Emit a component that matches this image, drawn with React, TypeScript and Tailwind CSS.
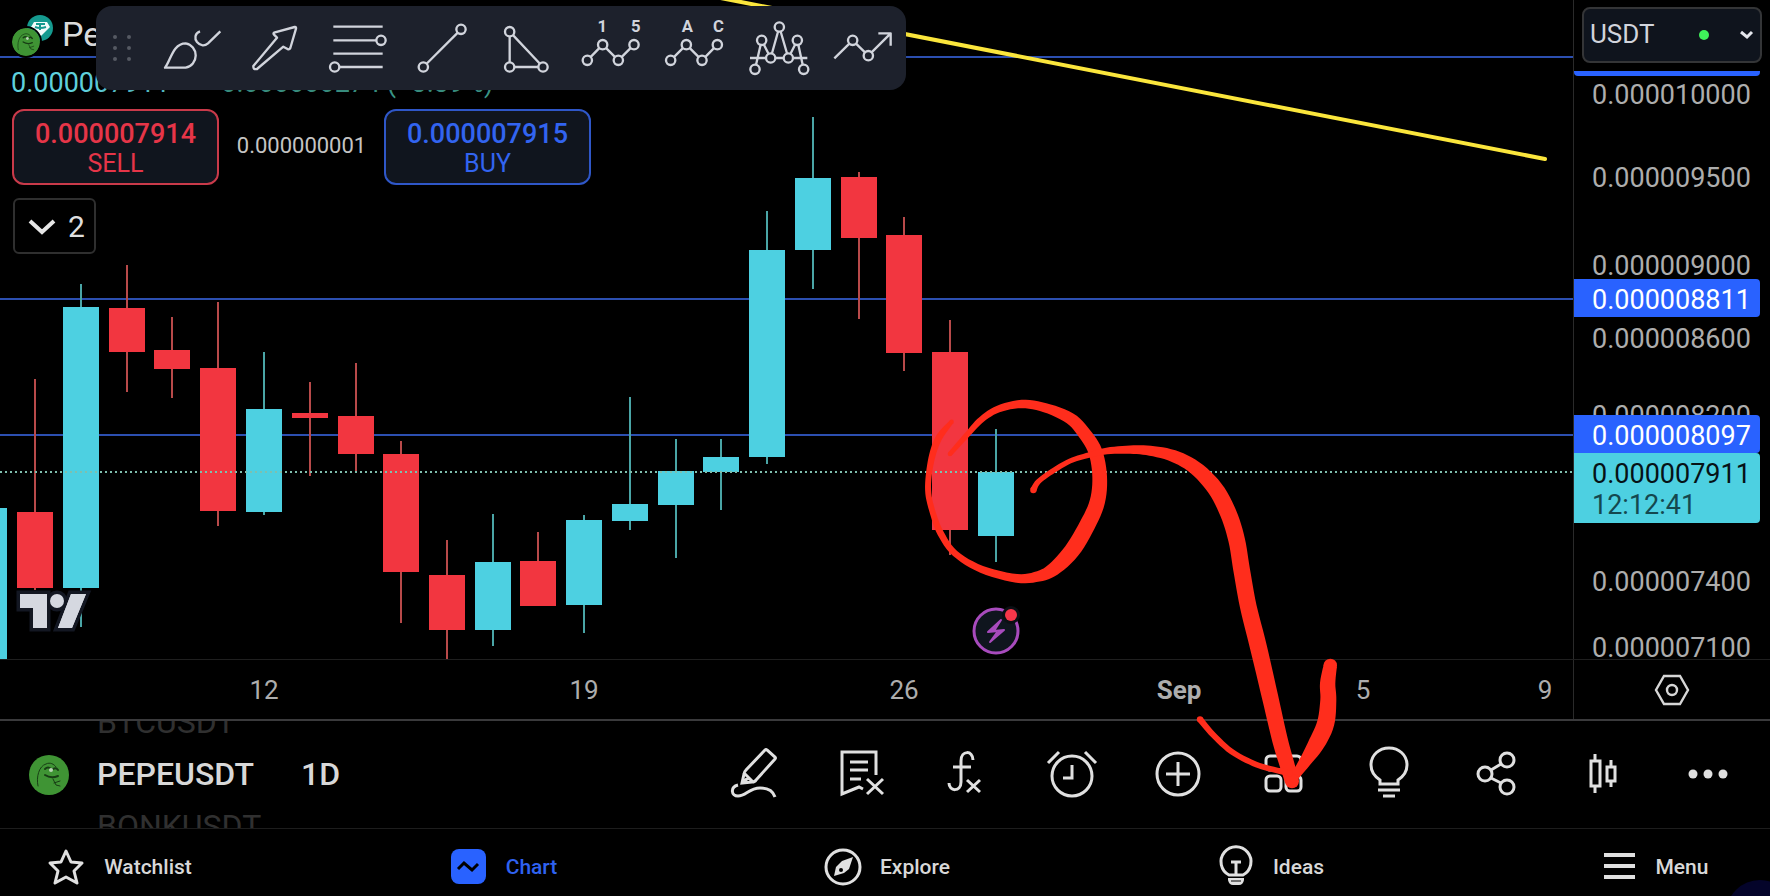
import { useState } from "react";
import type { ReactNode } from "react";

type Candle = { x: number; top: number; bottom: number; high: number; low: number; up: boolean };
type BrushPoint = [number, number, number];

const UP = "#4dd0e1";
const DOWN = "#f23640";

const candles: Candle[] = [
  { x: -11, top: 508, bottom: 659, high: 508, low: 659, up: true },
  { x: 35, top: 512, bottom: 588, high: 379, low: 590, up: false },
  { x: 81, top: 307, bottom: 588, high: 284, low: 627, up: true },
  { x: 127, top: 308, bottom: 352, high: 265, low: 392, up: false },
  { x: 172, top: 350, bottom: 369, high: 317, low: 398, up: false },
  { x: 218, top: 368, bottom: 511, high: 302, low: 526, up: false },
  { x: 264, top: 409, bottom: 512, high: 352, low: 515, up: true },
  { x: 310, top: 413, bottom: 418, high: 382, low: 476, up: false },
  { x: 356, top: 416, bottom: 454, high: 363, low: 472, up: false },
  { x: 401, top: 454, bottom: 572, high: 441, low: 623, up: false },
  { x: 447, top: 575, bottom: 630, high: 540, low: 659, up: false },
  { x: 493, top: 562, bottom: 630, high: 514, low: 646, up: true },
  { x: 538, top: 561, bottom: 606, high: 532, low: 606, up: false },
  { x: 584, top: 520, bottom: 605, high: 515, low: 633, up: true },
  { x: 630, top: 504, bottom: 521, high: 397, low: 530, up: true },
  { x: 676, top: 471, bottom: 505, high: 439, low: 558, up: true },
  { x: 721, top: 457, bottom: 472, high: 439, low: 510, up: true },
  { x: 767, top: 250, bottom: 457, high: 211, low: 464, up: true },
  { x: 813, top: 178, bottom: 250, high: 117, low: 289, up: true },
  { x: 859, top: 177, bottom: 238, high: 172, low: 319, up: false },
  { x: 904, top: 235, bottom: 353, high: 217, low: 371, up: false },
  { x: 950, top: 352, bottom: 530, high: 320, low: 555, up: false },
  { x: 996, top: 472, bottom: 536, high: 429, low: 562, up: true },
];

const levels = [57, 299, 435];

const prices = [
  { y: 95, label: "0.000010000" },
  { y: 178, label: "0.000009500" },
  { y: 266, label: "0.000009000" },
  { y: 339, label: "0.000008600" },
  { y: 416, label: "0.000008200" },
  { y: 582, label: "0.000007400" },
  { y: 648, label: "0.000007100" },
];

const dates = [
  { x: 264, label: "12" },
  { x: 584, label: "19" },
  { x: 904, label: "26" },
  { x: 1179, label: "Sep", bold: true },
  { x: 1363, label: "5" },
  { x: 1545, label: "9" },
];

// x, y and brush width, in thirds of a pixel
const circleStroke: BrushPoint[] = [
  [155, 125, 13], [120, 168, 20], [100, 215, 20], [87, 280, 18], [85, 340, 18], [99, 400, 18],
  [122, 460, 20], [165, 520, 19], [245, 568, 22], [350, 595, 26], [415, 589, 32], [460, 568, 40],
  [515, 513, 48], [562, 435, 48], [592, 365, 46], [599, 290, 44], [586, 215, 42], [553, 160, 39],
  [510, 115, 35], [435, 83, 28], [365, 72, 25], [295, 87, 21], [245, 118, 19], [205, 160, 17],
  [150, 222, 14],
];
const arrowStroke: BrushPoint[] = [
  [400, 330, 19], [415, 305, 16], [455, 275, 16], [510, 243, 15], [560, 227, 16], [620, 213, 20],
  [690, 209, 25], [750, 212, 30], [820, 228, 36], [885, 263, 42], [945, 325, 48], [985, 400, 50],
  [1010, 480, 50], [1025, 570, 50], [1045, 680, 50], [1075, 800, 51], [1110, 950, 49],
  [1140, 1080, 47], [1160, 1150, 45], [1176, 1204, 42],
];
const headRight: BrushPoint[] = [
  [1291, 856, 40], [1283, 910, 46], [1285, 960, 48], [1277, 1030, 52], [1250, 1090, 50],
  [1215, 1145, 36], [1180, 1195, 24],
];
const headLeft: BrushPoint[] = [
  [900, 1018, 19], [940, 1065, 18], [995, 1115, 17], [1060, 1150, 17], [1110, 1166, 17], [1170, 1180, 18],
];

function spline(a: number, b: number, c: number, d: number, t: number) {
  return 0.5 * (2 * b + (c - a) * t + (2 * a - 5 * b + 4 * c - d) * t * t + (3 * b - a - 3 * c + d) * t * t * t);
}

// outline of a pressure sensitive marker stroke
function brushPath(points: BrushPoint[]) {
  const samples: BrushPoint[] = [];
  const at = (i: number) => points[Math.max(0, Math.min(points.length - 1, i))];
  for (let i = 0; i < points.length - 1; i++) {
    for (let s = 0; s < 6; s++) {
      const t = s / 6;
      samples.push([0, 1, 2].map((k) => spline(at(i - 1)[k], at(i)[k], at(i + 1)[k], at(i + 2)[k], t)) as BrushPoint);
    }
  }
  samples.push(points[points.length - 1]);
  const left: string[] = [];
  const right: string[] = [];
  samples.forEach(([x, y, w], i) => {
    const p = samples[Math.max(0, i - 1)];
    const n = samples[Math.min(samples.length - 1, i + 1)];
    const len = Math.hypot(n[0] - p[0], n[1] - p[1]) || 1;
    const nx = (-(n[1] - p[1]) / len) * (w / 2);
    const ny = ((n[0] - p[0]) / len) * (w / 2);
    left.push(`${(x + nx).toFixed(1)} ${(y + ny).toFixed(1)}`);
    right.unshift(`${(x - nx).toFixed(1)} ${(y - ny).toFixed(1)}`);
  });
  return `M${left.join("L")}L${right.join("L")}Z`;
}

function Brush({ points }: { points: BrushPoint[] }) {
  const first = points[0];
  const last = points[points.length - 1];
  return (
    <>
      <path d={brushPath(points)} />
      <circle cx={first[0]} cy={first[1]} r={first[2] / 2} />
      <circle cx={last[0]} cy={last[1]} r={last[2] / 2} />
    </>
  );
}

function Annotation() {
  return (
    <svg className="pointer-events-none absolute inset-0 z-30 h-full w-full" aria-hidden="true">
      <g transform="translate(900 380) scale(0.33333)" fill="#ff2d1c">
        <Brush points={circleStroke} />
        <Brush points={arrowStroke} />
        <Brush points={headRight} />
        <Brush points={headLeft} />
      </g>
    </svg>
  );
}

function Dots({ points, r = 14 }: { points: number[][]; r?: number }) {
  return (
    <g fill="#1d212c">
      {points.map(([x, y]) => (
        <circle key={`${x}-${y}`} cx={x} cy={y} r={r} />
      ))}
    </g>
  );
}

const drawTools: { name: string; icon: ReactNode }[] = [
  {
    name: "Brush",
    icon: (
      <>
        <path d="M45 185C62 165 68 112 107 112A36 37 0 0 1 107 185Z" />
        <path d="M150 76C134 82 133 98 141 108C152 121 164 121 174 112L211 76" />
      </>
    ),
  },
  { name: "Arrow", icon: <path d="M182 63L120 80Q117 82 120 86L129 95L58 180Q57 192 69 189L148 122L162 130Q167 131 169 126L186 68Q187 62 182 63Z" /> },
  {
    name: "Fib retracement",
    icon: (
      <>
        <path d="M46 62H194M46 103H176M46 143H194M64 183H194" />
        <Dots points={[[189, 103], [50, 183]]} />
      </>
    ),
  },
  {
    name: "Trend line",
    icon: (
      <>
        <path d="M64 183L177 70" />
        <Dots points={[[177, 70], [64, 183]]} />
      </>
    ),
  },
  {
    name: "Triangle",
    icon: (
      <>
        <path d="M71 77V183H171Z" />
        <Dots points={[[71, 77], [71, 183], [171, 183]]} />
      </>
    ),
  },
  {
    name: "Impulse wave",
    icon: (
      <>
        <path d="M52 163L98 116L145 163L192 116" />
        <Dots points={[[52, 163], [98, 116], [145, 163], [192, 116]]} />
        <text x="97" y="79" className="fill-[#d1d4dc] stroke-none text-[50px] font-bold" textAnchor="middle">1</text>
        <text x="197" y="79" className="fill-[#d1d4dc] stroke-none text-[50px] font-bold" textAnchor="middle">5</text>
      </>
    ),
  },
  {
    name: "Correction wave",
    icon: (
      <>
        <path d="M50 163L97 116L144 163L190 116" />
        <Dots points={[[50, 163], [97, 116], [144, 163], [190, 116]]} />
        <text x="100" y="79" className="fill-[#d1d4dc] stroke-none text-[50px] font-bold" textAnchor="middle">A</text>
        <text x="193" y="79" className="fill-[#d1d4dc] stroke-none text-[50px] font-bold" textAnchor="middle">C</text>
      </>
    ),
  },
  {
    name: "Head and shoulders",
    icon: (
      <>
        <path d="M51 190L71 103L98 156L124 63L151 156L178 103L197 190M36 156H208" />
        <Dots points={[[124, 63], [71, 103], [178, 103], [98, 156], [151, 156], [51, 190], [197, 190]]} />
      </>
    ),
  },
  {
    name: "Forecast",
    icon: (
      <>
        <path d="M37 157L92 103L139 149L206 82M169 82H206V119" />
        <Dots points={[[92, 103], [139, 149]]} />
      </>
    ),
  },
];

function DrawingToolbar() {
  return (
    <div className="absolute top-[6px] left-24 z-20 flex h-[84px] items-center rounded-2xl bg-[#1d212c] shadow-lg">
      <svg className="h-[84px] w-[54px]" viewBox="0 0 54 84" fill="#555963">
        {[31, 42, 53].map((y) => (
          <g key={y}>
            <circle cx="19" cy={y} r="2" />
            <circle cx="33" cy={y} r="2" />
          </g>
        ))}
      </svg>
      {drawTools.map((tool) => (
        <button key={tool.name} aria-label={tool.name} className="h-[84px] w-[84px]">
          <svg viewBox="0 0 252 252" fill="none" stroke="#d1d4dc" strokeWidth="7" strokeLinejoin="round">
            {tool.icon}
          </svg>
        </button>
      ))}
    </div>
  );
}

function PepeFace({ className }: { className: string }) {
  return (
    <svg className={className} viewBox="0 0 40 40" fill="none" stroke="#173d14" strokeLinecap="round">
      <circle cx="20" cy="20" r="20" fill="#3f9434" stroke="none" />
      <path d="M9 31C7 22 10 11 17 9C21 7 25 9 27 12" strokeWidth="1" />
      <path d="M16 14Q19 11 22 14M24 14Q27 12 29 15" strokeWidth="2" />
      <circle cx="22" cy="15" r="2" fill="#b9d3b5" stroke="none" />
      <path d="M16 20Q22 24 29 21" strokeWidth="2" />
      <path d="M24 24L27 30L31 31M25 28L31 26" strokeWidth="1" />
    </svg>
  );
}

function Candles() {
  return (
    <svg className="absolute inset-0 h-full w-full">
      {levels.map((y) => (
        <line key={y} x1="0" x2="100%" y1={y} y2={y} stroke="#2c4fb0" strokeWidth="2" />
      ))}
      <line x1="700" y1="-6" x2="1545" y2="159" stroke="#fbe63c" strokeWidth="4" strokeLinecap="round" />
      {candles.map((c) => (
        <g key={c.x}>
          <line x1={c.x} x2={c.x} y1={c.high} y2={c.low} stroke={c.up ? "#4aa5a6" : "#b84a4a"} strokeWidth="2" />
          <rect x={c.x - 18} y={c.top} width="36" height={c.bottom - c.top} fill={c.up ? UP : DOWN} />
        </g>
      ))}
      <line x1="0" x2="100%" y1="472" y2="472" stroke="#7fbfae" strokeWidth="2" strokeDasharray="2 3" />
      {/* TradingView mark */}
      <g fill="#d5d8e0" stroke="#131722" strokeWidth="7" paintOrder="stroke">
        <path d="M20 594H47V628H33V608H20ZM71 594H86L72 628H58Z" />
        <circle cx="57" cy="601" r="7" />
      </g>
      <path d="M20 594H47V628H33V608H20ZM71 594H86L72 628H58Z" fill="#d5d8e0" />
      {/* news event */}
      <circle cx="996" cy="631" r="22" fill="#0f151e" stroke="#a84bbd" strokeWidth="3" />
      <circle cx="1011" cy="615" r="9" fill="#0b0f14" />
      <circle cx="1011" cy="615" r="6" fill="#f7374a" />
      <path d="M1001 620L988 632L998 631L990 642L1004 630L994 631Z" fill="#a84bbd" stroke="#a84bbd" strokeWidth="2" strokeLinejoin="round" />
    </svg>
  );
}

function Quote() {
  return (
    <div className="relative flex flex-col items-start">
      <div className="flex h-14 items-end gap-2 pl-3">
        <div className="relative h-[42px] w-[42px]">
          <svg className="absolute top-0 right-0 h-7 w-7" viewBox="0 0 28 28">
            <circle cx="14" cy="14" r="13" fill="#159a8f" />
            <path d="M8 8H21L24 13L15 22L5 13Z" fill="#f2fbfa" />
            <path d="M10 10H19M14 10V16M9 13Q14 15 20 13" stroke="#159a8f" strokeWidth="2" fill="none" />
          </svg>
          <PepeFace className="absolute bottom-0 left-0 h-7 w-7 rounded-full ring-2 ring-black" />
        </div>
        <span className="text-[34px] leading-[44px] text-[#dbdbdb]">Pepe / TetherUS</span>
      </div>
      <div className="flex h-[53px] items-center gap-9 pt-[2px] pl-[11px] text-[27px] whitespace-nowrap">
        <span className="text-[#5fd0dc]">0.000007911</span>
        <span className="text-[#3f9f8f]">−0.000000274 (−3.39%)</span>
      </div>
      <div className="flex items-center pl-3">
        <button className="flex h-[76px] w-[207px] flex-col items-center justify-center rounded-xl border-2 border-[#c93a4a] bg-[#10151e] pt-1 text-[#e63548]">
          <span className="text-[27px] leading-[30px] font-medium">0.000007914</span>
          <span className="text-[25px] leading-[30px]">SELL</span>
        </button>
        <span className="w-[165px] pb-1 text-center text-[22px] text-[#c4c4c4]">0.000000001</span>
        <button className="flex h-[76px] w-[207px] flex-col items-center justify-center rounded-xl border-2 border-[#2f57c8] bg-[#10151e] pt-1 text-[#3264f0]">
          <span className="text-[27px] leading-[30px] font-medium">0.000007915</span>
          <span className="text-[25px] leading-[30px]">BUY</span>
        </button>
      </div>
      <button className="mt-[13px] ml-[13px] flex h-14 w-[83px] items-center justify-center gap-3 rounded-md border-2 border-[#2f2f2f] pl-1 text-[30px] text-[#dedede]">
        <svg className="h-7 w-7" viewBox="0 0 28 28" fill="none" stroke="#e6e6e6" strokeWidth="4">
          <path d="M2 9L14 20L26 9" />
        </svg>
        2
      </button>
    </div>
  );
}

function PriceAxis() {
  const [currency, setCurrency] = useState("USDT");
  return (
    <div className="relative w-[197px] shrink-0 overflow-hidden border-l border-[#2a2a2a] text-[27px] leading-none">
      {prices.map((p) => (
        <span key={p.label} className="absolute left-[18px] -translate-y-1/2 text-[#adadad]" style={{ top: p.y }}>
          {p.label}
        </span>
      ))}
      <div className="absolute top-[71px] right-[10px] left-0 h-[5px] rounded-b-sm bg-[#2962ff]" />
      <div className="absolute top-[279px] right-[10px] left-0 flex h-[38px] items-center rounded-r-sm bg-[#2962ff] pt-1 pl-[18px] text-white">
        0.000008811
      </div>
      <div className="absolute top-[415px] right-[10px] left-0 flex h-[38px] items-center rounded-r-sm bg-[#2962ff] pt-1 pl-[18px] text-white">
        0.000008097
      </div>
      <div className="absolute top-[453px] right-[10px] left-0 flex h-[70px] flex-col justify-center gap-1 rounded-r-sm bg-[#4dd0e1] pt-1 pl-[18px] text-[#061216]">
        <span>0.000007911</span>
        <span className="text-[#14484f]">12:12:41</span>
      </div>
      <div className="relative mt-[7px] mr-2 ml-2">
        <select
          aria-label="Currency"
          value={currency}
          onChange={(e) => setCurrency(e.target.value)}
          className="h-14 w-full appearance-none rounded-lg border-2 border-[#343537] bg-[#0f141d] pb-[2px] pl-[6px] text-[26px] text-[#d1d4dc]"
        >
          <option>USDT</option>
          <option>USD</option>
        </select>
        <svg className="pointer-events-none absolute top-0 right-0 h-14 w-[72px]" viewBox="0 0 72 56" fill="none">
          <circle cx="14" cy="28" r="5" fill="#3ff25a" />
          <path d="M51 25L57 30L62 25" stroke="#e4e6ec" strokeWidth="3" />
        </svg>
      </div>
    </div>
  );
}

const chartTools: { name: string; icon: ReactNode }[] = [
  {
    name: "Draw",
    icon: (
      <>
        <path d="M41 6Q42 5 43 6L51 13Q52 14 51 15L32 36Q31 38 28 38L18 39L20 30Q20 28 22 26ZM20 29L29 38M18 39L24 34" />
        <path d="M14 41C6 43 7 52 14 52C22 52 25 44 36 44C44 44 49 47 51 53" />
      </>
    ),
  },
  {
    name: "Remove drawings",
    icon: <path d="M46 31V8H12V50L29 43L33 45M20 18H38M20 26H38M20 35H31M37 35L53 50M53 35L37 50" />,
  },
  {
    name: "Indicators",
    icon: <path d="M37 16C37 6 25 6 25 17V38C25 48 13 48 13 39M17 23H35M31 36L44 48M44 36L31 48" />,
  },
  {
    name: "Alerts",
    icon: (
      <>
        <circle cx="30" cy="32" r="20" />
        <path d="M30 21V34H21M6 19L17 8M43 8L54 19" />
      </>
    ),
  },
  {
    name: "Compare",
    icon: (
      <>
        <circle cx="30" cy="30" r="21" />
        <path d="M30 18V42M18 30H42" />
      </>
    ),
  },
  {
    name: "Layouts",
    icon: (
      <>
        <rect x="12" y="12" width="35" height="14" rx="4" />
        <rect x="12" y="32" width="15" height="15" rx="4" />
        <rect x="32" y="32" width="15" height="15" rx="4" />
      </>
    ),
  },
  {
    name: "Publish idea",
    icon: (
      <>
        <path d="M20 40V36C14 32 11 27 11 21C11 11 19 4 29 4S47 11 47 21C47 27 44 32 38 36V40Z" />
        <path d="M18 46H40M23 52H35" strokeWidth="3" />
      </>
    ),
  },
  {
    name: "Share",
    icon: (
      <>
        <circle cx="41" cy="16" r="7" />
        <circle cx="19" cy="30" r="7" />
        <circle cx="41" cy="43" r="7" />
        <path d="M25 26L35 20M25 34L35 39" />
      </>
    ),
  },
  {
    name: "Chart type",
    icon: (
      <>
        <rect x="19" y="17" width="9" height="25" />
        <rect x="35" y="23" width="8" height="14" />
        <path d="M23 10V17M23 42V49M39 16V23M39 37V43" />
      </>
    ),
  },
  {
    name: "More",
    icon: (
      <g fill="#e0e0e0" stroke="none">
        <circle cx="15" cy="30" r="4.5" />
        <circle cx="30" cy="30" r="4.5" />
        <circle cx="45" cy="30" r="4.5" />
      </g>
    ),
  },
];

function ChartBar() {
  return (
    <div className="flex h-[109px] items-stretch border-t-2 border-[#3a3a3c] pr-[9px]">
      <div className="flex items-center pl-[29px]">
        <PepeFace className="h-10 w-10" />
      </div>
      <div className="ml-7 flex w-44 flex-col justify-center overflow-hidden pb-[2px] text-[32px] leading-[52px]">
        <span className="shrink-0 text-[#303030]">BTCUSDT</span>
        <span className="shrink-0 font-medium text-[#d8d8d8]">PEPEUSDT</span>
        <span className="shrink-0 text-[#303030]">BONKUSDT</span>
      </div>
      <button className="ml-7 pb-[2px] text-[32px] font-medium text-[#d8d8d8]">1D</button>
      <div className="ml-auto flex pb-[2px]">
        {chartTools.map((tool) => (
          <button key={tool.name} aria-label={tool.name} className="flex w-[106px] items-center justify-center">
            <svg className="h-[60px] w-[60px]" viewBox="0 0 60 60" fill="none" stroke="#e0e0e0" strokeWidth="3">
              {tool.icon}
            </svg>
          </button>
        ))}
      </div>
    </div>
  );
}

const tabs: { name: string; active?: boolean; icon: ReactNode }[] = [
  { name: "Watchlist", icon: <path d="M18 3L23 14L34 15L26 23L29 35L18 29L7 35L10 23L2 15L13 14Z" strokeLinejoin="round" /> },
  {
    name: "Chart",
    active: true,
    icon: (
      <>
        <rect x="1" y="1" width="35" height="35" rx="8" fill="#2962ff" stroke="none" />
        <path d="M8 21L14 15L22 22L28 16" stroke="#000" />
      </>
    ),
  },
  {
    name: "Explore",
    icon: (
      <>
        <circle cx="19" cy="19" r="17" />
        <path d="M29 9L25 21L20 25L10 28L12 19L18 13Z" fill="#e0e0e0" stroke="none" />
        <circle cx="17" cy="22" r="2" fill="#000" stroke="none" />
      </>
    ),
  },
  {
    name: "Ideas",
    icon: (
      <>
        <path d="M12 27A15 15 0 1 1 26 27ZM14 14H24M19 14V27" />
        <path d="M11 30H27V32Q26 37 22 37H16Q12 37 11 32Z" fill="#e0e0e0" stroke="none" />
        <path d="M14 33H24" stroke="#000" strokeWidth="1" />
      </>
    ),
  },
  { name: "Menu", icon: <path d="M4 7H35M4 18H35M4 29H35" strokeWidth="4" /> },
];

function TabBar() {
  return (
    <nav className="flex h-[68px] items-center justify-between border-t border-[#1d1d1d] pl-1">
      {tabs.map((tab) => (
        <a
          key={tab.name}
          href={`#${tab.name.toLowerCase()}`}
          className={`flex w-[232px] items-center justify-center gap-5 pt-[10px] text-[21px] leading-none font-medium ${tab.active ? "text-[#2f62f0]" : "text-[#d8d8d8]"}`}
        >
          <svg className="h-10 w-9 overflow-visible" viewBox="0 0 36 40" fill="none" stroke="#e0e0e0" strokeWidth="3">
            {tab.icon}
          </svg>
          {tab.name}
        </a>
      ))}
    </nav>
  );
}

export default function App() {
  return (
    <div className="relative flex h-screen flex-col overflow-hidden bg-black font-[Roboto,'Liberation_Sans',sans-serif]">
      <main className="flex min-h-0 flex-1">
        <section className="relative flex-1 overflow-hidden">
          <Candles />
          <Quote />
          <DrawingToolbar />
        </section>
        <PriceAxis />
      </main>

      <div className="flex h-[60px] border-t border-[#1f1f1f]">
        <div className="relative flex-1 overflow-hidden">
          {dates.map((d) => (
            <span
              key={d.label}
              className={`absolute top-1/2 -translate-x-1/2 -translate-y-1/2 text-[26px] leading-none text-[#adadad] ${d.bold ? "font-bold" : ""}`}
              style={{ left: d.x }}
            >
              {d.label}
            </span>
          ))}
        </div>
        <button aria-label="Scale settings" className="flex w-[197px] items-center justify-center border-l border-[#2a2a2a]">
          <svg className="h-8 w-9" viewBox="0 0 36 32" fill="none" stroke="#d6d6d6" strokeWidth="2.4">
            <path d="M10 2H26L34 16L26 30H10L2 16Z" />
            <circle cx="18" cy="16" r="5" />
          </svg>
        </button>
      </div>

      <ChartBar />
      <TabBar />
      <div className="pointer-events-none absolute right-[-24px] -bottom-16 h-20 w-[68px] rounded-full bg-[#04042a]" />
      <Annotation />
    </div>
  );
}
